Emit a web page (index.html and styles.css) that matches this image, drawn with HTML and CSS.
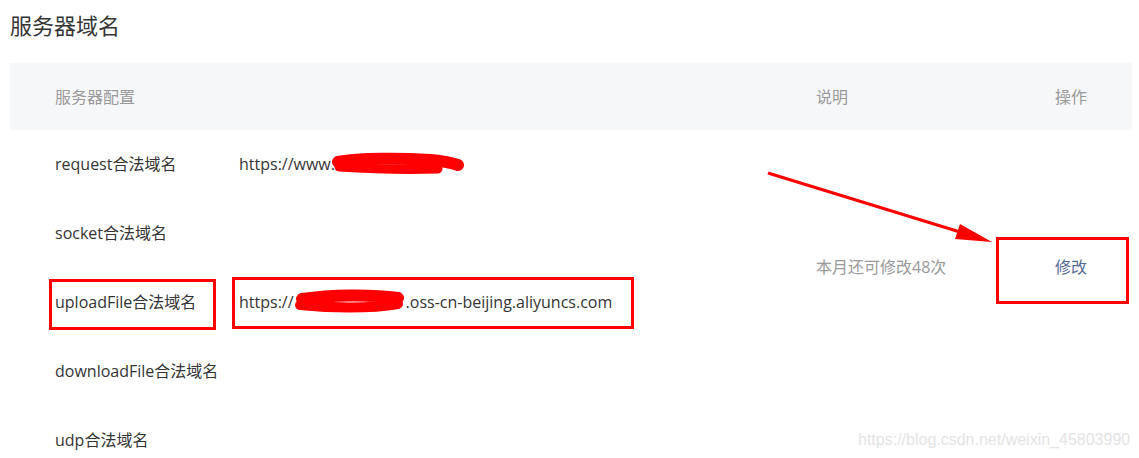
FILE: index.html
```html
<!DOCTYPE html>
<html lang="zh-CN">
<head>
<meta charset="utf-8">
<title>服务器域名</title>
<link rel="stylesheet" href="styles.css">
</head>
<body>
<div class="page">
  <h1 class="title">服务器域名</h1>
  <div class="table">
    <div class="th th-name">服务器配置</div>
    <div class="th"></div>
    <div class="th">说明</div>
    <div class="th">操作</div>

    <div class="cell name r1">request合法域名</div>
    <div class="cell value r1">https://www.</div>

    <div class="cell name r2">socket合法域名</div>
    <div class="cell value r2"></div>

    <div class="cell name r3">uploadFile合法域名</div>
    <div class="cell value r3">https://<span class="hidden-part"></span>.oss-cn-beijing.aliyuncs.com</div>

    <div class="cell name r4">downloadFile合法域名</div>
    <div class="cell value r4"></div>

    <div class="cell name r5">udp合法域名</div>
    <div class="cell value r5"></div>

    <div class="cell desc">本月还可修改48次</div>
    <div class="cell action"><a class="link">修改</a></div>
  </div>

  <div class="watermark">https://blog.csdn.net/weixin_45803990</div>

  <svg class="marks" width="1139" height="458" viewBox="0 0 1139 458" xmlns="http://www.w3.org/2000/svg">
    <g fill="none" stroke="#ff0000" stroke-linecap="round" stroke-linejoin="round">
      <path d="M338 162 C360 158, 400 158, 430 160 C445 161, 452 163, 458 165" stroke-width="12"/>
      <path d="M339 167 C370 169, 405 170, 438 169" stroke-width="9"/>
      <path d="M302 299 C330 295, 370 294, 398 298" stroke-width="12"/>
      <path d="M300 305 C330 308, 370 309, 398 304" stroke-width="10"/>
    </g>
    <g fill="none" stroke="#ff0000" stroke-width="3">
      <rect x="50.5" y="280.5" width="164" height="48"/>
      <rect x="233.5" y="278.5" width="399" height="49"/>
      <rect x="997.5" y="238.5" width="130" height="64"/>
      <line x1="768" y1="173" x2="960" y2="232"/>
    </g>
    <polygon points="992,242 955,239 960,224" fill="#ff0000"/>
  </svg>
</div>
</body>
</html>
```

FILE: styles.css
```css
html, body {
  margin: 0;
  padding: 0;
  background: #ffffff;
}

body {
  font-family: "Open Sans", "Noto Sans CJK SC", sans-serif;
  color: #353535;
}

.page {
  position: relative;
  width: 1139px;
  height: 458px;
  overflow: hidden;
  padding: 10px 7px 0 10px;
  box-sizing: border-box;
}

.title {
  margin: 0 0 23px 0;
  font-size: 22px;
  line-height: 30px;
  font-weight: normal;
  color: #353535;
}

.table {
  display: grid;
  grid-template-columns: 229px 577px 239px 77px;
  grid-template-rows: 67px repeat(5, 69px);
  font-size: 16px;
  line-height: 20px;
}

.th {
  background: #f6f7f9;
  color: #9a9a9a;
  display: flex;
  align-items: center;
}

.th-name {
  padding-left: 45px;
}

.cell {
  display: flex;
  align-items: center;
  white-space: nowrap;
  padding-bottom: 2px;
}

.name {
  grid-column: 1;
  padding-left: 45px;
}

.value {
  grid-column: 2;
}

.r1 { grid-row: 2; }
.r2 { grid-row: 3; }
.r3 { grid-row: 4; }
.r4 { grid-row: 5; }
.r5 { grid-row: 6; }

.hidden-part {
  display: inline-block;
  width: 112px;
}

.desc {
  grid-column: 3;
  grid-row: 3 / span 2;
  color: #9a9a9a;
}

.action {
  grid-column: 4;
  grid-row: 3 / span 2;
}

.link {
  color: #576b95;
  text-decoration: none;
}

.watermark {
  position: absolute;
  left: 858px;
  top: 430px;
  font-family: "Liberation Sans", sans-serif;
  font-size: 16px;
  line-height: 20px;
  color: #e4e4e4;
  white-space: nowrap;
}

.marks {
  position: absolute;
  left: 0;
  top: 0;
  pointer-events: none;
}
```
